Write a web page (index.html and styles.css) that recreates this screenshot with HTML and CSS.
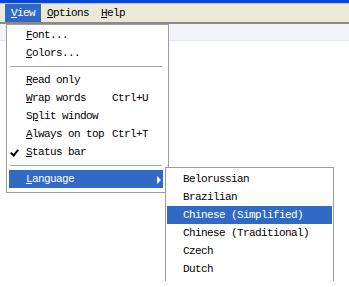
FILE: index.html
```html
<!DOCTYPE html>
<html lang="en">

<head>
  <meta charset="UTF-8">
  <title>View menu</title>
  <link rel="stylesheet" href="styles.css">
</head>

<body>
  <div class="titlebar"></div>
  <nav class="menubar">
    <span class="menubar-item active"><u>V</u>iew</span>
    <span class="menubar-item"><u>O</u>ptions</span>
    <span class="menubar-item"><u>H</u>elp</span>
  </nav>
  <div class="toolbar"></div>
  <main class="document"></main>

  <ul class="menu view-menu">
    <li class="menu-item"><span class="label"><u>F</u>ont...</span></li>
    <li class="menu-item"><span class="label"><u>C</u>olors...</span></li>
    <li class="menu-sep"></li>
    <li class="menu-item"><span class="label"><u>R</u>ead only</span></li>
    <li class="menu-item"><span class="label"><u>W</u>rap words</span><span class="key">Ctrl+U</span></li>
    <li class="menu-item"><span class="label">S<u>p</u>lit window</span></li>
    <li class="menu-item"><span class="label"><u>A</u>lways on top</span><span class="key">Ctrl+T</span></li>
    <li class="menu-item checked"><span class="label"><u>S</u>tatus bar</span></li>
    <li class="menu-sep"></li>
    <li class="menu-item selected has-sub"><span class="label"><u>L</u>anguage</span></li>
  </ul>

  <ul class="menu lang-menu">
    <li class="menu-item">Belorussian</li>
    <li class="menu-item">Brazilian</li>
    <li class="menu-item selected">Chinese (Simplified)</li>
    <li class="menu-item">Chinese (Traditional)</li>
    <li class="menu-item">Czech</li>
    <li class="menu-item">Dutch</li>
  </ul>
</body>

</html>
```

FILE: styles.css
```css
* {
  box-sizing: border-box;
  margin: 0;
  padding: 0;
}

html {
  font-family: "Liberation Mono", "DejaVu Sans Mono", monospace;
  font-size: 11px;
  letter-spacing: -0.6px;
  color: #000;
  background: #fff;
}

body {
  width: 349px;
  height: 287px;
  overflow: hidden;
  position: relative;
}

u {
  text-underline-offset: 1px;
}

/* window chrome */
.titlebar {
  height: 4px;
  background: linear-gradient(#0846d8 0 3px, #a9c6f2 3px);
}

.menubar {
  display: flex;
  height: 20px;
  padding-left: 5px;
  background: #ece9d8;
  border-bottom: 2px solid #8a8a84;
}

.menubar-item {
  display: flex;
  align-items: center;
  padding: 0 6px;
}

.menubar-item.active {
  background: #316ac5;
  color: #fff;
}

.toolbar {
  height: 17px;
  background: #f2f4fa;
  border-bottom: 1px solid #e4e7ef;
}

/* drop-down menus */
.menu {
  position: absolute;
  list-style: none;
  background: #fff;
  border: 1px solid #9d9d9d;
}

.view-menu {
  left: 6px;
  top: 24px;
  width: 163px;
  padding: 1px 5px 4px 2px;
}

.lang-menu {
  left: 165px;
  top: 167px;
  width: 169px;
  padding: 2px 1px 3px 1px;
  border-bottom: none;
}

.menu-item {
  position: relative;
  display: flex;
  align-items: center;
  height: 18px;
  padding-left: 17px;
  white-space: nowrap;
}

.lang-menu .menu-item {
  padding-left: 16px;
}

.menu-item .label {
  width: 86px;
}

.menu-item.selected {
  background: #316ac5;
  color: #fff;
}

.menu-item.checked::before {
  content: "";
  position: absolute;
  left: 3px;
  top: 5px;
  width: 3px;
  height: 6px;
  border: solid #000;
  border-width: 0 2px 2px 0;
  transform: rotate(40deg);
}

.menu-item.has-sub::after {
  content: "";
  position: absolute;
  right: 2px;
  top: 6px;
  border: 4px solid transparent;
  border-left: 4px solid #fff;
  border-right: none;
}

.menu-sep {
  height: 9px;
  display: flex;
  align-items: center;
  padding: 0 1px;
}

.menu-sep::before {
  content: "";
  flex: 1;
  border-top: 1px solid #a7a7a7;
}
```
